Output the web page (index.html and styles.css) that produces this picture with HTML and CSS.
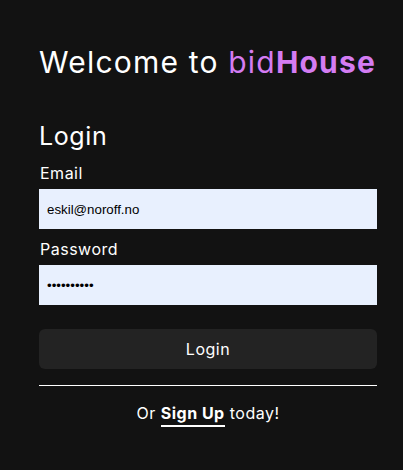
FILE: index.html
```html
<!DOCTYPE html>
<html lang="en">
<head>
<meta charset="utf-8">
<title>bidHouse - Login</title>
<link rel="stylesheet" href="styles.css">
</head>
<body>
<main class="page">
  <h1 class="title">Welcome to <span class="brand">bid<strong>House</strong></span></h1>
  <form class="form">
    <h2 class="form-title">Login</h2>
    <label class="label" for="email">Email</label>
    <input class="input" id="email" type="email" value="eskil@noroff.no">
    <label class="label" for="password">Password</label>
    <input class="input" id="password" type="password" value="passwordxx">
    <button class="btn" type="button">Login</button>
    <hr class="divider">
    <p class="signup">Or <a class="signup-link" href="#">Sign Up</a> today!</p>
  </form>
</main>
</body>
</html>
```
FILE: styles.css
```css
html, body {
  margin: 0;
  background: #121212;
  color: #ffffff;
  font-family: "Inter", "DejaVu Sans", sans-serif;
}
.page {
  width: 338px;
  padding: 40px 0 0 39px;
}
.title {
  margin: 0;
  font-size: 30px;
  font-weight: 400;
  line-height: 44px;
  letter-spacing: 1.2px;
  white-space: nowrap;
}
.brand {
  color: #d47cf2;
}
.brand strong {
  font-weight: 700;
}
.form {
  display: flex;
  flex-direction: column;
  margin-top: 36px;
}
.form-title {
  margin: 0 0 11px;
  font-size: 25px;
  font-weight: 400;
  line-height: 32px;
  letter-spacing: 0.6px;
}
.label {
  font-size: 16px;
  line-height: 20px;
  letter-spacing: 0.5px;
  margin: 0 0 6px 1px;
}
.input {
  box-sizing: border-box;
  height: 40px;
  border: 0;
  margin: 0 0 10px;
  padding: 0 8px;
  background: #e8f0fe;
  color: #000;
  font-family: "Liberation Sans", Arial, sans-serif;
  font-size: 13.3px;
  outline: none;
}
.btn {
  margin-top: 14px;
  height: 40px;
  border: 0;
  border-radius: 6px;
  background: #232323;
  color: #fff;
  font-family: inherit;
  font-size: 16px;
  letter-spacing: 0.5px;
}
.divider {
  margin: 16px 0 0;
  border: 0;
  height: 1px;
  background: #fff;
}
.signup {
  margin: 17px 0 0;
  text-align: center;
  font-size: 16px;
  line-height: 20px;
  letter-spacing: 0.5px;
}
.signup-link {
  display: inline-block;
  color: #fff;
  font-weight: 700;
  text-decoration: none;
  line-height: 20px;
  padding-bottom: 2px;
  border-bottom: 2px solid #fff;
  vertical-align: top;
}
```
